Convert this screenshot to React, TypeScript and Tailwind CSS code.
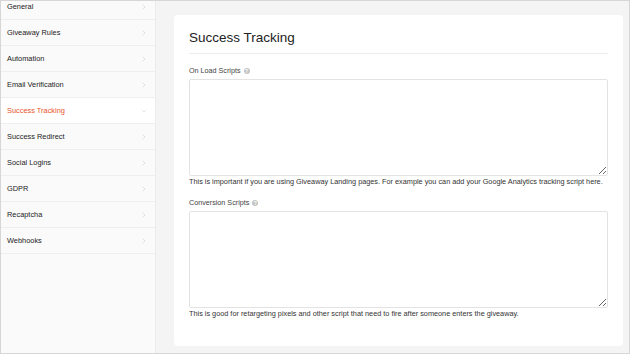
import { ChevronRight, ChevronDown } from "lucide-react";

const menu = [
  "General",
  "Giveaway Rules",
  "Automation",
  "Email Verification",
  "Success Tracking",
  "Success Redirect",
  "Social Logins",
  "GDPR",
  "Recaptcha",
  "Webhooks",
];

function Help() {
  return (
    <span className="ml-[3px] inline-flex h-[6px] w-[6px] items-center justify-center rounded-full bg-[#c4c4c4] text-[5px] font-bold leading-none text-white">
      ?
    </span>
  );
}

function Field({ label, help }: { label: string; help: string }) {
  return (
    <div className="flex flex-col">
      <div className="flex h-[10px] items-center text-[7.2px] text-[#444]">
        {label}
        <Help />
      </div>
      <textarea
        readOnly
        className="mt-[3px] h-[97px] w-full resize-y rounded-[2px] border border-[#e3e3e3] bg-white"
      />
      <p className="mt-[1px] h-[10px] text-[7.3px] leading-[10px] text-[#333]">{help}</p>
    </div>
  );
}

export default function App() {
  return (
    <div
      className="flex h-[354px] w-[630px] overflow-hidden border border-[#d6d6d6] bg-[#f4f4f4]"
      style={{ fontFamily: '"Liberation Sans", Arial, sans-serif' }}
    >
      {/* Sidebar */}
      <aside className="w-[155px] shrink-0 border-r border-[#ececec] bg-[#fafafa]">
        <ul className="-mt-[7px]">
          {menu.map((item) => {
            const active = item === "Success Tracking";
            return (
              <li
                key={item}
                className={`flex h-[26px] items-center justify-between border-b border-[#efefef] pl-[6px] pr-[7px] text-[7.4px] ${
                  active ? "bg-white text-[#e8532b]" : "text-[#222]"
                }`}
              >
                <span>{item}</span>
                {active ? (
                  <ChevronDown size={8} strokeWidth={1.5} className="text-[#c8c8c8]" />
                ) : (
                  <ChevronRight size={8} strokeWidth={1.5} className="text-[#c8c8c8]" />
                )}
              </li>
            );
          })}
        </ul>
      </aside>

      {/* Main */}
      <main className="flex-1 pb-[7px] pl-[18px] pr-[6px] pt-[14px]">
        <div className="h-full rounded-[4px] bg-white px-[15px] pt-[14px]">
          <h1 className="border-b border-[#ececec] pb-[6px] text-[13.5px] leading-[18px] text-[#222]">
            Success Tracking
          </h1>
          <div className="mt-[12px]">
            <Field
              label="On Load Scripts"
              help="This is important if you are using Giveaway Landing pages. For example you can add your Google Analytics tracking script here."
            />
          </div>
          <div className="mt-[11px]">
            <Field
              label="Conversion Scripts"
              help="This is good for retargeting pixels and other script that need to fire after someone enters the giveaway."
            />
          </div>
        </div>
      </main>
    </div>
  );
}
